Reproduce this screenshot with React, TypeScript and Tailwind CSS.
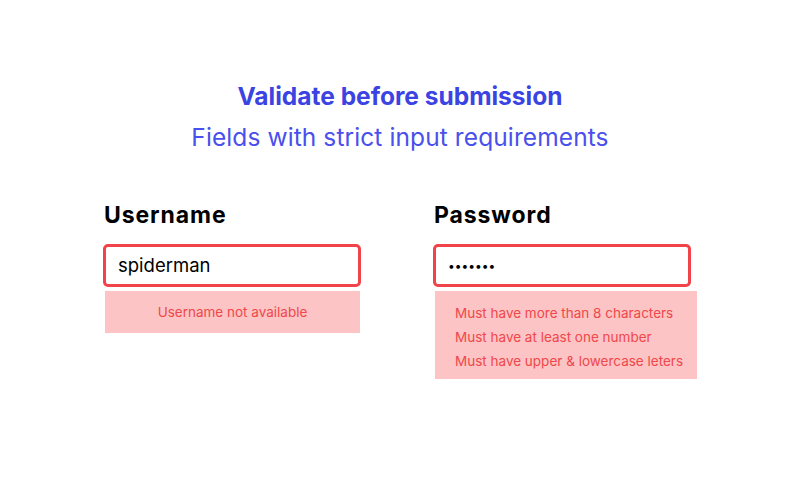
import React from 'react';

const font = { fontFamily: 'Inter, "Noto Sans", sans-serif' };

const Field: React.FC<{
    label: string;
    value: React.ReactNode;
    errors: string[];
    centered?: boolean;
    errorWidth: string;
}> = ({ label, value, errors, centered, errorWidth }) => (
    <div className="flex flex-col">
        <div className="h-7 leading-7 text-[23px] font-bold text-black tracking-[0.9px] pl-[1px]">{label}</div>
        <div className="mt-[15px] w-[258px] h-[43px] border-[3px] border-[#f0444a] rounded-[5px] flex items-center px-3 bg-white">
            {value}
        </div>
        <div className={`mt-[4px] ${errorWidth} ml-[2px] bg-[#fcc4c4] ${centered ? 'h-[42px] flex items-center justify-center' : 'pt-[10px] pb-[6px] pl-5'}`}>
            {errors.map(e => (
                <div key={e} className="text-[13.5px] leading-6 text-[#f0474b]">{e}</div>
            ))}
        </div>
    </div>
);

export default function App() {
    return (
        <div className="w-[800px] h-[480px] bg-white flex flex-col items-center pt-[80px]" style={font}>
            <h1 className="h-8 leading-8 text-[24.5px] font-bold text-[#3b43e2]">
                Validate before submission
            </h1>
            <p className="mt-[9px] h-8 leading-8 text-[24.5px] text-[#4a50ec] tracking-[0.1px]">
                Fields with strict input requirements
            </p>

            <div className="mt-[48px] flex gap-[72px] w-[594px]">
                <Field
                    label="Username"
                    value={<span className="text-[18.5px] text-black">spiderman</span>}
                    errors={["Username not available"]}
                    centered
                    errorWidth="w-[255px]"
                />
                <Field
                    label="Password"
                    value={<span className="text-[12px] text-black">•••••••</span>}
                    errors={[
                        "Must have more than 8 characters",
                        "Must have at least one number",
                        "Must have upper & lowercase leters",
                    ]}
                    errorWidth="w-[262px]"
                />
            </div>
        </div>
    );
}
